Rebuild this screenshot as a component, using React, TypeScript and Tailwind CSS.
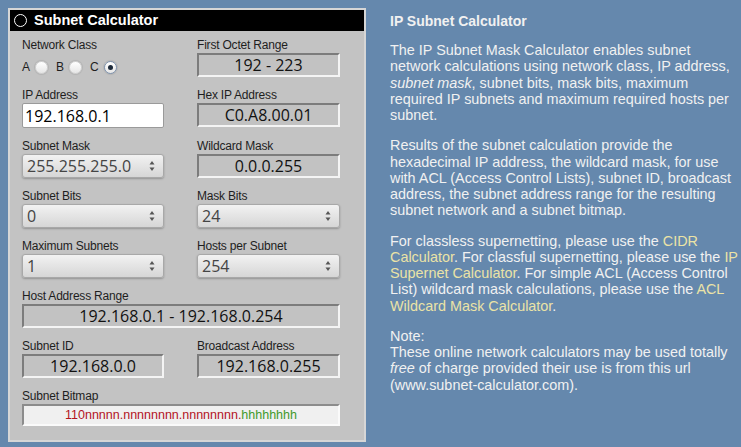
import React from 'react';

const Label: React.FC<{ children: React.ReactNode }> = ({ children }) => (
  <div className="h-4 text-[12px] leading-4 text-[#1e1e1e] tracking-[-0.2px]">{children}</div>
);

const Readout: React.FC<{ value: string; className?: string }> = ({ value, className = '' }) => (
  <div
    className={`h-6 flex items-center justify-center border-2 border-t-[#7c7c7c] border-l-[#7c7c7c] border-b-[#f4f4f4] border-r-[#f4f4f4] bg-[#c2c2c2] text-[16px] text-[#111] font-['Open_Sans',sans-serif] ${className}`}
  >
    {value}
  </div>
);

const Spinner: React.FC<{ value: string }> = ({ value }) => (
  <div className="h-6 flex items-center justify-between pl-1 pr-2 rounded-[3px] border border-[#a8a8a8] bg-gradient-to-b from-[#f2f2f2] to-[#d6d6d6] shadow-[0_1px_2px_rgba(0,0,0,0.25)] text-[16px] text-[#444] font-['Open_Sans',sans-serif]">
    <span>{value}</span>
    <svg width="6" height="12" viewBox="0 0 6 12">
      <path d="M3 1 L5.5 4.5 L0.5 4.5 Z" fill="#555" />
      <path d="M3 11 L5.5 7.5 L0.5 7.5 Z" fill="#555" />
    </svg>
  </div>
);

const Radio: React.FC<{ checked?: boolean }> = ({ checked }) => (
  <span
    className={`inline-flex items-center justify-center w-[13px] h-[13px] rounded-full bg-gradient-to-b from-white to-[#e6e6e6] shadow-[0_0_1px_1px_rgba(0,0,0,0.08)] ${
      checked ? 'border border-[#7f93ad]' : 'border border-[#d2d2d2]'
    }`}
  >
    {checked && <span className="w-[5px] h-[5px] rounded-full bg-[#1c2a3a]" />}
  </span>
);

const App: React.FC = () => {
  return (
    <div className="w-[741px] h-[447px] bg-[#6588ad] flex font-['Liberation_Sans',Arial,sans-serif] overflow-hidden">
      {/* Calculator panel */}
      <div className="mt-2 ml-2 w-[358px] h-[434px] border-2 border-[#d6d6d6] bg-[#c3c3c3] flex flex-col">
        <div className="h-[21px] bg-black flex items-center pl-1 gap-[7px]">
          <span className="w-[13px] h-[13px] rounded-full border border-white" />
          <span className="text-white font-bold text-[14.5px] leading-none">Subnet Calculator</span>
        </div>

        <div className="pt-[6px] pl-3 grid grid-cols-[142px_143px] gap-x-[33px] gap-y-[10px]">
          <div>
            <Label>Network Class</Label>
            <div className="h-6 flex items-center text-[12px] text-[#1e1e1e] gap-[5px] pt-1">
              <span>A</span>
              <Radio />
              <span className="ml-[3px]">B</span>
              <Radio />
              <span className="ml-[3px]">C</span>
              <Radio checked />
            </div>
          </div>
          <div>
            <Label>First Octet Range</Label>
            <Readout value="192 - 223" />
          </div>

          <div>
            <Label>IP Address</Label>
            <div className="h-[25px] flex items-center px-[2px] bg-white border border-[#9a9a9a] rounded-[2px] text-[16px] text-black font-['Open_Sans',sans-serif]">
              192.168.0.1
            </div>
          </div>
          <div>
            <Label>Hex IP Address</Label>
            <Readout value="C0.A8.00.01" />
          </div>

          <div>
            <Label>Subnet Mask</Label>
            <Spinner value="255.255.255.0" />
          </div>
          <div>
            <Label>Wildcard Mask</Label>
            <Readout value="0.0.0.255" />
          </div>

          <div>
            <Label>Subnet Bits</Label>
            <Spinner value="0" />
          </div>
          <div>
            <Label>Mask Bits</Label>
            <Spinner value="24" />
          </div>

          <div>
            <Label>Maximum Subnets</Label>
            <Spinner value="1" />
          </div>
          <div>
            <Label>Hosts per Subnet</Label>
            <Spinner value="254" />
          </div>

          <div className="col-span-2">
            <Label>Host Address Range</Label>
            <Readout value="192.168.0.1 - 192.168.0.254" />
          </div>

          <div>
            <Label>Subnet ID</Label>
            <Readout value="192.168.0.0" />
          </div>
          <div>
            <Label>Broadcast Address</Label>
            <Readout value="192.168.0.255" />
          </div>

          <div className="col-span-2">
            <Label>Subnet Bitmap</Label>
            <div className="h-[22px] flex items-center justify-center border-2 border-t-[#8c8c8c] border-l-[#8c8c8c] border-b-[#fafafa] border-r-[#fafafa] bg-[#f0f0f0] text-[12.5px]">
              <span className="text-[#b3141e]">110nnnnn.nnnnnnnn.nnnnnnnn.</span>
              <span className="text-[#3f9a2c]">hhhhhhhh</span>
            </div>
          </div>
        </div>
      </div>

      {/* Description */}
      <div className="ml-6 w-[348px] pt-[13px] text-[14.4px] leading-[16.25px] text-[#f1f1f1]">
        <h2 className="font-bold text-[14px] leading-4">IP Subnet Calculator</h2>
        <p className="mt-[13px]">
          The IP Subnet Mask Calculator enables subnet network calculations using network class, IP address,{' '}
          <i>subnet mask</i>, subnet bits, mask bits, maximum required IP subnets and maximum required hosts per
          subnet.
        </p>
        <p className="mt-[14px]">
          Results of the subnet calculation provide the hexadecimal IP address, the wildcard mask, for use with ACL
          (Access Control Lists), subnet ID, broadcast address, the subnet address range for the resulting subnet
          network and a subnet bitmap.
        </p>
        <p className="mt-[14px]">
          For classless supernetting, please use the <span className="text-[#ebe3a6]">CIDR Calculator</span>. For
          classful supernetting, please use the <span className="text-[#ebe3a6]">IP Supernet Calculator</span>. For
          simple ACL (Access Control List) wildcard mask calculations, please use the{' '}
          <span className="text-[#ebe3a6]">ACL Wildcard Mask Calculator</span>.
        </p>
        <p className="mt-[14px]">
          Note:
          <br />
          These online network calculators may be used totally <i>free</i> of charge provided their use is from this
          url (www.subnet-calculator.com).
        </p>
      </div>
    </div>
  );
};

export default App;
